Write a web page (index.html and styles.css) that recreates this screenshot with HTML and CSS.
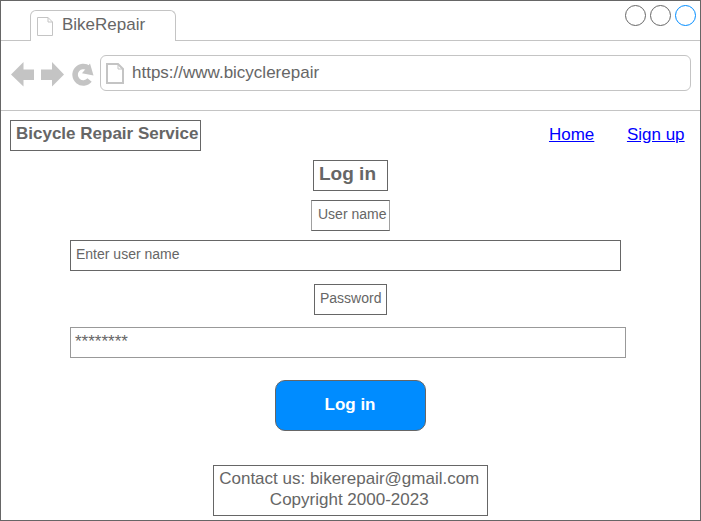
FILE: index.html
```html
<!DOCTYPE html>
<html lang="en">
<head>
<meta charset="utf-8">
<title>BikeRepair</title>
<link rel="stylesheet" href="styles.css">
</head>
<body>
<div class="window">
  <header class="tabs">
    <div class="tab">
      <svg class="tab-icon" width="16" height="19" viewBox="0 0 16 19"><path d="M.5.5h10.5l4.5 4.5v13.5H.5zM11 .5V5h4.5"/></svg>
      <span>BikeRepair</span>
    </div>
    <div class="controls">
      <svg width="71" height="21" viewBox="0 0 71 21"><circle cx="10.5" cy="10.5" r="10"/><circle cx="35.5" cy="10.5" r="10"/><circle class="active" cx="60.5" cy="10.5" r="10"/></svg>
    </div>
  </header>
  <div class="toolbar">
    <svg class="nav" width="84" height="26" viewBox="0 0 84 26">
      <path d="M0 13.500L12.500 1v7.500H23v10.500H12.500v6.500zM53 13.500L41 1v7.500H30v10.500H41v6.500z"/>
      <path class="reload" d="M78.600 19A8.200 8.200 0 1 1 77.500 7.400"/>
      <path d="M79 2.500L82.500 14.500L71 12.300z"/>
    </svg>
    <div class="address">
      <svg class="page-icon" width="18" height="21" viewBox="0 0 18 21"><path d="M1 1h11l5 5v14H1z"/><path class="fold" d="M12 1v5h5"/></svg>
      <span>https://www.bicyclerepair</span>
    </div>
  </div>
  <main class="page">
    <div class="masthead">
      <div class="box brand">Bicycle Repair Service</div>
      <nav class="links"><a href="#">Home</a><a href="#">Sign up</a></nav>
    </div>
    <h1 class="box heading">Log in</h1>
    <div class="box label user">User name</div>
    <div class="box field">Enter user name</div>
    <div class="box label password">Password</div>
    <div class="box field secret">********</div>
    <button class="submit">Log in</button>
    <footer class="box footer">Contact us: bikerepair@gmail.com<br>Copyright 2000-2023</footer>
  </main>
</div>
</body>
</html>
```

FILE: styles.css
```css
* { box-sizing: border-box; }
body {
  margin: 0;
  background: #fff;
  color: #666;
  font: 17px/20px "Liberation Sans", Arial, sans-serif;
}
.window {
  width: 701px;
  height: 521px;
  border: 1px solid #666;
  overflow: hidden;
}
svg { display: block; flex: none; }
.tabs {
  display: flex;
  height: 40px;
  padding: 9px 0 0 29px;
  border-bottom: 1px solid #c4c4c4;
}
.tab {
  display: flex;
  width: 146px;
  height: 31px;
  padding: 4px 0 0 6px;
  gap: 9px;
  border: 1px solid #c4c4c4;
  border-bottom: 0;
  border-radius: 6px 6px 0 0;
  background: #fff;
}
.tab-icon { margin-top: 2px; }
.tab-icon path { fill: none; stroke: #c4c4c4; }
.controls { margin: -5px 4px 0 auto; }
.controls circle { fill: #fff; stroke: #666; }
.controls .active { stroke: #008cff; }
.toolbar {
  display: flex;
  height: 70px;
  padding: 14px 9px 0 10px;
  border-bottom: 1px solid #c4c4c4;
}
.nav { margin: 6px 5px 0 0; fill: #c4c4c4; }
.nav .reload { fill: none; stroke: #c4c4c4; stroke-width: 5.5; }
.address {
  display: flex;
  flex: 1;
  height: 36px;
  padding: 7px 0 0 5px;
  gap: 8px;
  border: 1px solid #c4c4c4;
  border-radius: 6px;
}
.page-icon path { fill: none; stroke: #c4c4c4; stroke-width: 2; }
.page-icon .fold { stroke-width: 1; }
.page {
  display: flex;
  flex-direction: column;
  align-items: flex-start;
  padding: 9px 0 0 9px;
}
.masthead {
  display: flex;
  justify-content: space-between;
  width: 674.6px;
}
.box {
  height: 31px;
  border: 1px solid #666;
  white-space: nowrap;
}
.brand { width: 191px; padding: 3px 0 0 5px; font-weight: bold; }
.links { display: flex; gap: 32.6px; padding-top: 5px; }
.links a { color: #00f; }
.heading {
  width: 75px;
  margin: 9px 0 0 303px;
  padding: 2px 0 0 5px;
  font-size: 19px;
  line-height: 22px;
}
.label, .field { font-size: 14px; line-height: 16px; padding: 5px 0 0 5px; }
.user {
  width: 79px;
  margin: 9px 0 0 301px;
  padding-left: 6px;
  border-left-color: #a0a0a0;
  border-right-color: #a0a0a0;
}
.field { width: 551px; margin: 9px 0 0 60px; }
.password { width: 73px; margin: 13px 0 0 304px; }
.field.secret {
  width: 556px;
  margin-top: 12px;
  padding: 4px 0 0 4px;
  border-color: #999;
  font-size: 17px;
  line-height: 20px;
}
.submit {
  width: 151px;
  height: 51px;
  margin: 22px 0 0 265px;
  padding: 0 1px 2px 0;
  border: 1px solid #666;
  border-radius: 10px;
  background: #008cff;
  color: #fff;
  font: bold 17px/20px "Liberation Sans", Arial, sans-serif;
}
.footer {
  width: 275px;
  height: 51px;
  margin: 34px 0 0 203px;
  padding: 2px 2.5px 0 0;
  line-height: 21px;
  text-align: center;
}
```
